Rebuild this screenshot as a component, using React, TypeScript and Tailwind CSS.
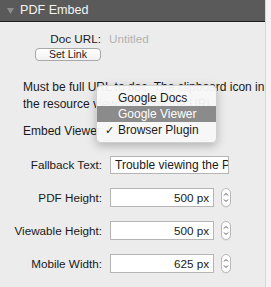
import React from 'react';

const font = { fontFamily: '"Liberation Sans", Arial, sans-serif' };

interface NumRow {
	label: string;
	value: string;
}

const numRows: NumRow[] = [
	{ label: 'PDF Height:', value: '500 px' },
	{ label: 'Viewable Height:', value: '500 px' },
	{ label: 'Mobile Width:', value: '625 px' },
];

const Stepper: React.FC = () => (
	<div className="ml-[7px] flex h-[19px] w-[10px] flex-col items-center justify-center rounded-[5px] border border-[#b8b8b8] bg-white shadow-[0_1px_0_rgba(0,0,0,0.05)]">
		<svg width="6" height="13" viewBox="0 0 6 13" fill="none" stroke="#555" strokeWidth="1">
			<path d="M1 4.5 L3 2.5 L5 4.5" />
			<path d="M1 8.5 L3 10.5 L5 8.5" />
		</svg>
	</div>
);

export default function App() {
	return (
		<div className="flex h-[287px] w-[271px] overflow-hidden bg-[#ececec] text-[11.7px] text-[#1a1a1a]" style={font}>
			<div className="relative flex w-[265px] flex-col">
				{/* Header */}
				<div className="flex h-[22px] items-center border-b border-[#1e1e1e] bg-[#5a5a5a] pl-[7px]">
					<svg width="7" height="6" viewBox="0 0 7 6" className="mt-[1px]">
						<path d="M0 0 L7 0 L3.5 6 Z" fill="#8d8d8d" />
					</svg>
					<span className="ml-[6px] text-[12.6px] leading-none text-[#f4f4f4]">PDF Embed</span>
				</div>

				{/* Doc URL */}
				<div className="mt-[9px] flex h-[16px] items-center">
					<span className="w-[101px] text-right">Doc URL:</span>
					<span className="ml-[8px] text-[#b3b3b3]">Untitled</span>
				</div>
				<div className="ml-[35px] mt-[1px] flex h-[13px] w-[66px] items-center justify-center rounded-[4px] border border-[#a9a9a9] bg-gradient-to-b from-white to-[#f1f1f1] text-[10.5px] leading-none">
					Set Link
				</div>

				{/* Help text */}
				<p className="ml-[23px] mt-[18px] w-[246px] text-[12px] leading-[17px]">
					Must be full URL to doc. The clipboard icon in the resource view will copy the URL.
				</p>

				<div className="ml-[23px] mt-[10px] h-[17px] text-[12px] leading-[17px]">Embed Viewer:</div>

				{/* Fallback */}
				<div className="mt-[16px] flex items-center">
					<span className="w-[102px] text-right">Fallback Text:</span>
					<div className="ml-[8px] flex h-[18px] w-[119px] items-center overflow-hidden whitespace-nowrap border border-[#b5b5b5] bg-white pl-[4px] text-[12px]">
						Trouble viewing the PDF?
					</div>
				</div>

				{/* Number rows */}
				<div className="mt-[14px] flex flex-col gap-[14px]">
					{numRows.map((row) => (
						<div key={row.label} className="flex items-center">
							<span className="w-[102px] text-right">{row.label}</span>
							<div className="ml-[8px] flex h-[19px] w-[104px] items-center justify-end border border-[#b5b5b5] bg-white pr-[4px]">
								{row.value}
							</div>
							<Stepper />
						</div>
					))}
				</div>

				{/* Popup menu */}
				<div className="absolute left-[96px] top-[85px] w-[121px] rounded-[5px] border border-[#d0d0d0] bg-[#f8f8f8]/95 py-[4px] shadow-[0_3px_10px_rgba(0,0,0,0.25)]">
					{['Google Docs', 'Google Viewer', 'Browser Plugin'].map((item, i) => (
						<div
							key={item}
							className={
								i === 1
									? 'flex h-[16px] items-center bg-[#8b8b8b] text-white'
									: 'flex h-[16px] items-center text-[#1a1a1a]'
							}
						>
							<span className="w-[21px] pl-[8px] text-[11px]">{i === 2 ? '✓' : ''}</span>
							<span className="text-[12px]">{item}</span>
						</div>
					))}
				</div>
			</div>

			{/* Right edge strip */}
			<div className="w-[6px] border-l border-[#d6d6d6] bg-[#f3f3f3]" />
		</div>
	);
}
